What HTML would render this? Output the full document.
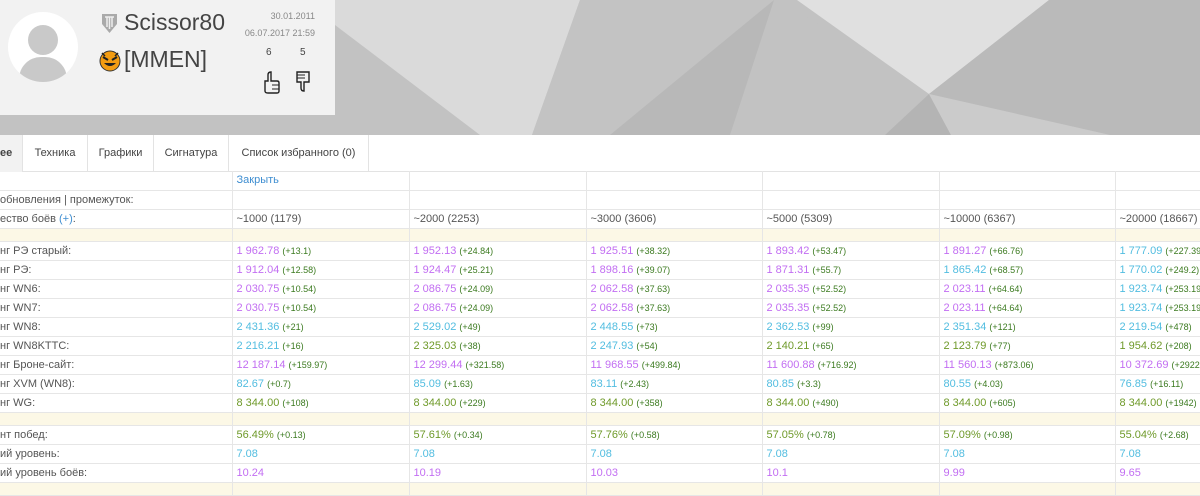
<!DOCTYPE html>
<html><head><meta charset="utf-8"><style>
*{margin:0;padding:0;box-sizing:border-box}
body{width:1200px;height:489px;overflow:hidden;background:#fff;font-family:"Liberation Sans",sans-serif;position:relative;color:#444}
.hdr{position:absolute;left:0;top:0;width:1200px;height:135px}
.card{position:absolute;left:0;top:0;width:335px;height:115px;background:#f2f2f2}
.av{position:absolute;left:8px;top:12px;width:70px;height:70px;border-radius:50%;background:#fff;overflow:hidden}
.name{position:absolute;left:124px;top:9px;font-size:23px;color:#444}
.clan{position:absolute;left:124px;top:46px;font-size:23px;color:#444}
.d{position:absolute;font-size:9px;color:#888;text-align:right;right:20px}
.tabs{position:absolute;left:0;top:135px;width:1200px;height:37px;background:#fff;border-bottom:1px solid #e3e3e3;font-size:11px}
.tab{position:absolute;top:0;height:37px;line-height:37px;padding:0 0;border-right:1px solid #e3e3e3;text-align:center}
table{position:absolute;left:0;top:171px;width:1215px;border-collapse:collapse;font-size:11px;table-layout:fixed}
td{height:19px;border-bottom:1px solid #e6e6e6;border-right:1px solid #e6e6e6;padding:0 4px;white-space:nowrap;overflow:hidden;color:#555}
td.l{padding-left:0}
tr.y td{background:#fcf8e6;height:13px}
.p{color:#c26ef2}.b{color:#52bde0}.g{color:#6f9a2a}
small{font-size:9px;color:#3b7a1f}
a{color:#3f8ed1;text-decoration:none}
</style></head><body>
<svg class="hdr" width="1200" height="135" viewBox="0 0 1200 135">
<rect width="1200" height="135" fill="#c2c2c2"/>
<polygon points="335,25 335,0 580,0 532,135 480,135" fill="#dadada"/>
<polygon points="580,0 774,0 610,135 532,135" fill="#c3c3c3"/>
<polygon points="774,0 610,135 730,135" fill="#b8b8b8"/>
<polygon points="780,0 730,135 885,135 929,94" fill="#c2c2c2"/>
<polygon points="797,0 1049,0 929,94" fill="#e0e0e0"/>
<polygon points="1049,0 1200,0 1200,135 1110,135 929,94" fill="#bababa"/>
<polygon points="929,94 885,135 951,135" fill="#b4b4b4"/>
<polygon points="929,94 951,135 1110,135" fill="#cbcbcb"/>
</svg>
<div class="card">
 <div class="av"><div style="position:absolute;left:20px;top:13px;width:30px;height:30px;border-radius:50%;background:#c9c9c9"></div><div style="position:absolute;left:11px;top:45px;width:48px;height:40px;border-radius:22px 22px 0 0;background:#c9c9c9"></div></div>
 <svg style="position:absolute;left:101px;top:12px" width="17" height="22" viewBox="0 0 17 22"><path d="M1 2 L16 2 L16 12 L8.5 21 L1 12Z" fill="#aaa"/><path d="M4 5h9M6 5v10M11 5v10M8.5 5v12" stroke="#eee" stroke-width="1.5"/></svg>
 <div class="name">Scissor80</div>
 <svg style="position:absolute;left:98px;top:48px" width="24" height="24" viewBox="0 0 24 24"><circle cx="12" cy="13" r="10" fill="#f39c12" stroke="#333" stroke-width="1"/><path d="M5 9l5 3M19 9l-5 3" stroke="#222" stroke-width="2"/><path d="M6 15q6 6 12 0z" fill="#222"/><path d="M4 5l3 3M20 5l-3 3" stroke="#222" stroke-width="1.5"/></svg>
 <div class="clan">[MMEN]</div>
 <div class="d" style="top:11px">30.01.2011</div>
 <div class="d" style="top:28px">06.07.2017 21:59</div>
 <div style="position:absolute;left:266px;top:47px;font-size:10px;color:#444">6</div>
 <div style="position:absolute;left:300px;top:47px;font-size:10px;color:#444">5</div>
 <svg style="position:absolute;left:262px;top:70px" width="18" height="24" viewBox="0 0 18 24"><path d="M3 11h3V5q0-3 3-3v9h6q2 0 2 2v8q0 2-2 2H6q-3 0-3-2z" fill="none" stroke="#222" stroke-width="1.4"/><path d="M10 15h7M10 19h7" stroke="#222"/></svg>
 <svg style="position:absolute;left:295px;top:70px" width="16" height="24" viewBox="0 0 16 24"><path d="M2 2h12v10H9v9q-3 0-3-3v-6H2z" fill="none" stroke="#222" stroke-width="1.4"/><path d="M2 5h8M2 8h8" stroke="#222"/></svg>
</div>
<div class="tabs">
 <div class="tab" style="left:0;width:23px;background:#f2f2f2;font-weight:bold;text-align:right;padding-right:10px">ее</div>
 <div class="tab" style="left:23px;width:65px">Техника</div>
 <div class="tab" style="left:88px;width:66px">Графики</div>
 <div class="tab" style="left:154px;width:75px">Сигнатура</div>
 <div class="tab" style="left:229px;width:140px">Список избранного (0)</div>
</div>
<table>
<colgroup><col style="width:232px"><col style="width:177px"><col style="width:177px"><col style="width:176px"><col style="width:177px"><col style="width:176px"><col style="width:100px"></colgroup>
<tr><td class="l"></td><td><a>Закрыть</a></td><td></td><td></td><td></td><td></td><td></td></tr>
<tr><td class="l">обновления | промежуток:</td><td></td><td></td><td></td><td></td><td></td><td></td></tr>
<tr><td class="l">ество боёв <a>(+)</a>:</td><td>~1000 (1179)</td><td>~2000 (2253)</td><td>~3000 (3606)</td><td>~5000 (5309)</td><td>~10000 (6367)</td><td>~20000 (18667)</td></tr>
<tr class="y"><td></td><td></td><td></td><td></td><td></td><td></td><td></td></tr>
<tr><td class="l">нг РЭ старый:</td><td><span class="p">1 962.78</span> <small>(+13.1)</small></td><td><span class="p">1 952.13</span> <small>(+24.84)</small></td><td><span class="p">1 925.51</span> <small>(+38.32)</small></td><td><span class="p">1 893.42</span> <small>(+53.47)</small></td><td><span class="p">1 891.27</span> <small>(+66.76)</small></td><td><span class="b">1 777.09</span> <small>(+227.39)</small></td></tr>
<tr><td class="l">нг РЭ:</td><td><span class="p">1 912.04</span> <small>(+12.58)</small></td><td><span class="p">1 924.47</span> <small>(+25.21)</small></td><td><span class="p">1 898.16</span> <small>(+39.07)</small></td><td><span class="p">1 871.31</span> <small>(+55.7)</small></td><td><span class="b">1 865.42</span> <small>(+68.57)</small></td><td><span class="b">1 770.02</span> <small>(+249.2)</small></td></tr>
<tr><td class="l">нг WN6:</td><td><span class="p">2 030.75</span> <small>(+10.54)</small></td><td><span class="p">2 086.75</span> <small>(+24.09)</small></td><td><span class="p">2 062.58</span> <small>(+37.63)</small></td><td><span class="p">2 035.35</span> <small>(+52.52)</small></td><td><span class="p">2 023.11</span> <small>(+64.64)</small></td><td><span class="b">1 923.74</span> <small>(+253.19)</small></td></tr>
<tr><td class="l">нг WN7:</td><td><span class="p">2 030.75</span> <small>(+10.54)</small></td><td><span class="p">2 086.75</span> <small>(+24.09)</small></td><td><span class="p">2 062.58</span> <small>(+37.63)</small></td><td><span class="p">2 035.35</span> <small>(+52.52)</small></td><td><span class="p">2 023.11</span> <small>(+64.64)</small></td><td><span class="b">1 923.74</span> <small>(+253.19)</small></td></tr>
<tr><td class="l">нг WN8:</td><td><span class="b">2 431.36</span> <small>(+21)</small></td><td><span class="b">2 529.02</span> <small>(+49)</small></td><td><span class="b">2 448.55</span> <small>(+73)</small></td><td><span class="b">2 362.53</span> <small>(+99)</small></td><td><span class="b">2 351.34</span> <small>(+121)</small></td><td><span class="b">2 219.54</span> <small>(+478)</small></td></tr>
<tr><td class="l">нг WN8KTTC:</td><td><span class="b">2 216.21</span> <small>(+16)</small></td><td><span class="g">2 325.03</span> <small>(+38)</small></td><td><span class="b">2 247.93</span> <small>(+54)</small></td><td><span class="g">2 140.21</span> <small>(+65)</small></td><td><span class="g">2 123.79</span> <small>(+77)</small></td><td><span class="g">1 954.62</span> <small>(+208)</small></td></tr>
<tr><td class="l">нг Броне-сайт:</td><td><span class="p">12 187.14</span> <small>(+159.97)</small></td><td><span class="p">12 299.44</span> <small>(+321.58)</small></td><td><span class="p">11 968.55</span> <small>(+499.84)</small></td><td><span class="p">11 600.88</span> <small>(+716.92)</small></td><td><span class="p">11 560.13</span> <small>(+873.06)</small></td><td><span class="p">10 372.69</span> <small>(+2922.7)</small></td></tr>
<tr><td class="l">нг XVM (WN8):</td><td><span class="b">82.67</span> <small>(+0.7)</small></td><td><span class="b">85.09</span> <small>(+1.63)</small></td><td><span class="b">83.11</span> <small>(+2.43)</small></td><td><span class="b">80.85</span> <small>(+3.3)</small></td><td><span class="b">80.55</span> <small>(+4.03)</small></td><td><span class="b">76.85</span> <small>(+16.11)</small></td></tr>
<tr><td class="l">нг WG:</td><td><span class="g">8 344.00</span> <small>(+108)</small></td><td><span class="g">8 344.00</span> <small>(+229)</small></td><td><span class="g">8 344.00</span> <small>(+358)</small></td><td><span class="g">8 344.00</span> <small>(+490)</small></td><td><span class="g">8 344.00</span> <small>(+605)</small></td><td><span class="g">8 344.00</span> <small>(+1942)</small></td></tr>
<tr class="y"><td></td><td></td><td></td><td></td><td></td><td></td><td></td></tr>
<tr><td class="l">нт побед:</td><td><span class="g">56.49%</span> <small>(+0.13)</small></td><td><span class="g">57.61%</span> <small>(+0.34)</small></td><td><span class="g">57.76%</span> <small>(+0.58)</small></td><td><span class="g">57.05%</span> <small>(+0.78)</small></td><td><span class="g">57.09%</span> <small>(+0.98)</small></td><td><span class="g">55.04%</span> <small>(+2.68)</small></td></tr>
<tr><td class="l">ий уровень:</td><td><span class="b">7.08</span></td><td><span class="b">7.08</span></td><td><span class="b">7.08</span></td><td><span class="b">7.08</span></td><td><span class="b">7.08</span></td><td><span class="b">7.08</span></td></tr>
<tr><td class="l">ий уровень боёв:</td><td><span class="p">10.24</span></td><td><span class="p">10.19</span></td><td><span class="p">10.03</span></td><td><span class="p">10.1</span></td><td><span class="p">9.99</span></td><td><span class="p">9.65</span></td></tr>
<tr class="y"><td></td><td></td><td></td><td></td><td></td><td></td><td></td></tr>
</table>
</body></html>
